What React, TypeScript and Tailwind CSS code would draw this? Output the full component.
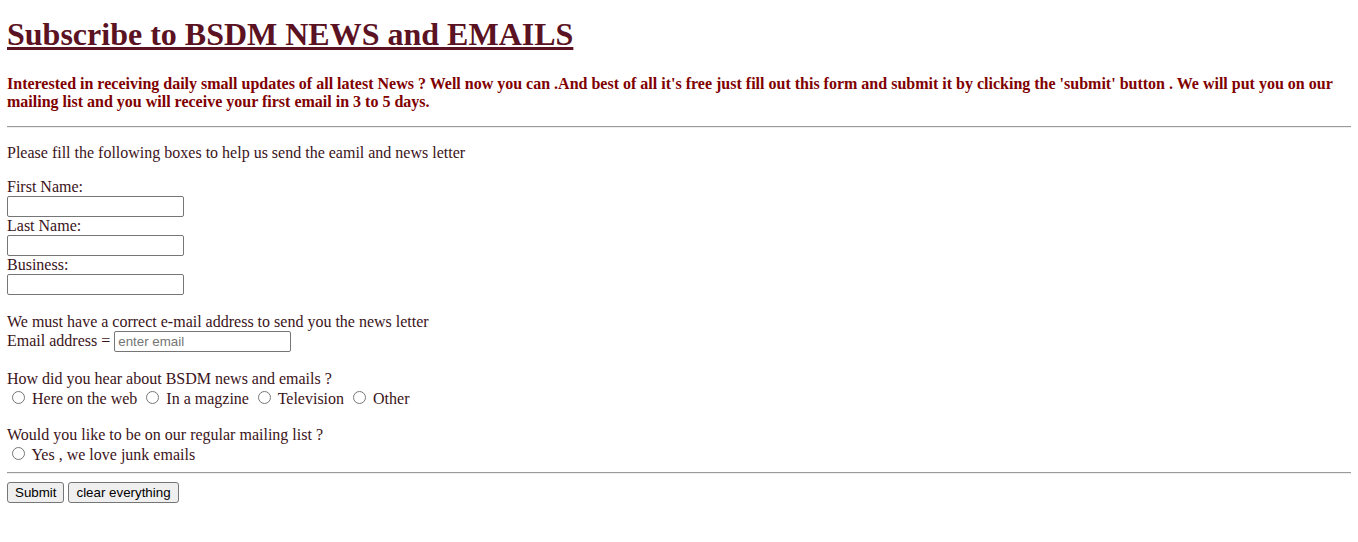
import React from "react";

const textInput =
  "inline-block w-[177px] h-[21px] border border-[#767676] rounded-[2px] px-[3px] bg-white font-['Liberation_Sans',Arial,sans-serif] text-[13.333px] leading-[normal] text-black placeholder:text-[#757575] align-baseline";

const radio = "ml-[5px] mr-[3px] mt-[3px] align-baseline";

const button =
  "inline-block h-[21px] px-[7px] border border-[#767676] rounded-[3px] bg-[#efefef] font-['Liberation_Sans',Arial,sans-serif] text-[13.333px] leading-[normal] text-black";

const App = () => {
  return (
    <div className="min-h-screen bg-white px-[7px] pt-[16px] font-['Liberation_Serif','Times_New_Roman',serif] text-base leading-[normal] text-[#3b1320]">
      <h1 className="text-[32px] font-bold underline text-[#5b1222]">Subscribe to BSDM NEWS and EMAILS</h1>

      <p className="mt-[22px] font-bold text-[#800000]">
        Interested in receiving daily small updates of all latest News ? Well now you can .And best of all it's free just fill out this form and submit it by clicking the 'submit' button . We will put you on our mailing list and you will receive your first email in 3 to 5 days.
      </p>

      <hr className="mt-[15px] h-0 border-t border-b border-t-[#9a9a9a] border-b-[#eeeeee]" />

      <p className="mt-[16px]">Please fill the following boxes to help us send the eamil and news letter</p>

      <form className="mt-[16px]" onSubmit={(e) => e.preventDefault()}>
        First Name:
        <br />
        <input type="text" className={textInput} />
        <br />
        Last Name:
        <br />
        <input type="text" className={textInput} />
        <br />
        Business:
        <br />
        <input type="text" className={textInput} />
        <br />
        <br />
        We must have a correct e-mail address to send you the news letter
        <br />
        Email address = <input type="email" placeholder="enter email" className={textInput} />
        <br />
        <br />
        How did you hear about BSDM news and emails ?
        <br />
        <input type="radio" name="heard" className={radio} /> Here on the web{" "}
        <input type="radio" name="heard" className={radio} /> In a magzine{" "}
        <input type="radio" name="heard" className={radio} /> Television{" "}
        <input type="radio" name="heard" className={radio} /> Other
        <br />
        <br />
        Would you like to be on our regular mailing list ?
        <br />
        <input type="radio" name="list" className={radio} /> Yes , we love junk emails

        <hr className="mt-[8px] h-0 border-t border-b border-t-[#9a9a9a] border-b-[#eeeeee]" />

        <div className="mt-[8px]">
          <button type="submit" className={button}>Submit</button>{" "}
          <button type="reset" className={button}>clear everything</button>
        </div>
      </form>
    </div>
  );
};

export default App;
